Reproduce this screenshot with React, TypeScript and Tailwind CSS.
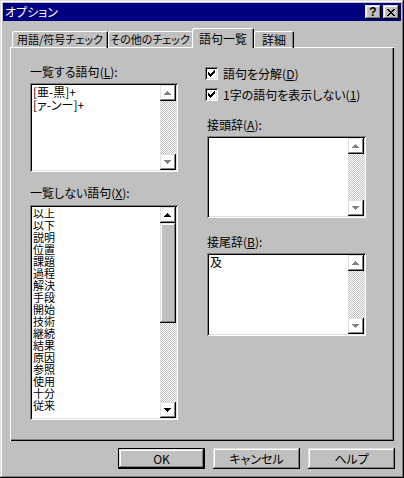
import React from "react";

const font = "font-['Noto_Sans_CJK_JP',sans-serif] [font-feature-settings:'palt']";
const raised =
	"shadow-[inset_-1px_-1px_#000,inset_1px_1px_#dfdfdf,inset_-2px_-2px_#808080,inset_2px_2px_#fff]";
const sunken =
	"shadow-[inset_1px_1px_#808080,inset_-1px_-1px_#fff,inset_2px_2px_#000,inset_-2px_-2px_#dfdfdf]";
const dither =
	"bg-[conic-gradient(#c0c0c0_25%,#fff_0_50%,#c0c0c0_0_75%,#fff_0)] bg-[length:2px_2px]";

const UP = "M3 0h1v1h1v1h1v1h1v1H0V3h1V2h1V1h1z";
const DOWN = "M0 0h7v1H6v1H5v1H4v1H3V3H2V2H1V1H0z";

function Arrow({ dir, disabled }: { dir: "up" | "down"; disabled?: boolean }) {
	const d = dir === "up" ? UP : DOWN;
	return (
		<svg width="8" height="5" viewBox="0 0 8 5" shapeRendering="crispEdges">
			{disabled && <path d={d} fill="#fff" transform="translate(1,1)" />}
			<path d={d} fill={disabled ? "#808080" : "#000"} />
		</svg>
	);
}

function ScrollBtn({ dir, disabled }: { dir: "up" | "down"; disabled?: boolean }) {
	return (
		<div className={`flex h-[16px] w-[16px] shrink-0 items-center justify-center ${raised}`}>
			<Arrow dir={dir} disabled={disabled} />
		</div>
	);
}

function ListBox({
	items,
	height,
	lineClass,
	thumb,
}: {
	items: string[];
	height: string;
	lineClass: string;
	thumb?: boolean;
}) {
	return (
		<div className={`flex bg-white p-[2px] ${height} ${sunken}`}>
			<div className="flex-1 overflow-hidden pl-[1px] text-black">
				{items.map((t) => (
					<div key={t} className={`whitespace-nowrap ${lineClass}`}>
						{t}
					</div>
				))}
			</div>
			<div className="flex w-[16px] flex-col">
				<ScrollBtn dir="up" disabled={!thumb} />
				{thumb && <div className={`h-[100px] w-[16px] shrink-0 bg-[#c0c0c0] ${raised}`} />}
				<div className={`flex-1 ${dither}`} />
				<ScrollBtn dir="down" disabled={!thumb} />
			</div>
		</div>
	);
}

function Label({ text, acc, className = "" }: { text: string; acc: string; className?: string }) {
	return (
		<div className={`h-[14px] text-[12px] leading-[14px] text-black ${className}`}>
			{text}(<span className="underline">{acc}</span>):
		</div>
	);
}

function Check({ text, acc, className = "" }: { text: string; acc: string; className?: string }) {
	return (
		<div className={`flex h-[13px] items-center gap-[5px] ${className}`}>
			<div className={`flex h-[13px] w-[13px] items-center justify-center bg-white ${sunken}`}>
				<svg width="7" height="7" viewBox="0 0 7 7" shapeRendering="crispEdges">
					<path d="M6 0h1v3H6v1H5v1H4v1H3v1H2V6H1V5H0V2h1v1h1v1h1V3h1V2h1V1h1z" fill="#000" />
				</svg>
			</div>
			<div className="whitespace-nowrap text-[12px] leading-[14px] text-black">
				{text}(<span className="underline">{acc}</span>)
			</div>
		</div>
	);
}

function Button({ label, isDefault }: { label: string; isDefault?: boolean }) {
	return (
		<div className={`h-[21px] w-[87px] ${isDefault ? "border border-black" : ""}`}>
			<div
				className={`flex h-full w-full items-center justify-center text-[12px] text-black ${raised}`}
			>
				{label}
			</div>
		</div>
	);
}

const excluded = [
	"以上",
	"以下",
	"説明",
	"位置",
	"課題",
	"過程",
	"解決",
	"手段",
	"開始",
	"技術",
	"継続",
	"結果",
	"原因",
	"参照",
	"使用",
	"十分",
	"従来",
];

export default function App() {
	return (
		<div
			className={`flex h-[478px] w-[404px] flex-col bg-[#c0c0c0] p-[3px] ${font} shadow-[inset_-1px_-1px_#000,inset_1px_1px_#dfdfdf,inset_-2px_-2px_#808080,inset_2px_2px_#fff]`}
		>
			{/* TITLE BAR */}
			<div className="flex h-[18px] items-center bg-[#000080] pl-[2px] pr-[2px]">
				<div className="flex-1 text-[12px] leading-[18px] text-white">オプション</div>
				<div
					className={`flex h-[14px] w-[16px] items-center justify-center bg-[#c0c0c0] font-['Liberation_Sans',sans-serif] text-[12px] font-bold leading-none text-black ${raised}`}
				>
					?
				</div>
				<div
					className={`ml-[2px] flex h-[14px] w-[16px] items-center justify-center bg-[#c0c0c0] ${raised}`}
				>
					<svg width="8" height="7" viewBox="0 0 8 7" shapeRendering="crispEdges">
						<path
							d="M0 0h2v1h1v1h2V1h1V0h2v1H7v1H6v1H5v1h1v1h1v1h1v1H6V6H5V5H3v1H2v1H0V6h1V5h1V4h1V3H2V2H1V1H0z"
							fill="#000"
						/>
					</svg>
				</div>
			</div>

			{/* TABS */}
			<div className="px-[7px] pt-[7px]">
				<div className="flex h-[20px] items-end pl-[2px]">
					<div className="flex h-[17px] w-[96px] items-center justify-center whitespace-nowrap rounded-t-[2px] text-[11px] text-black shadow-[inset_1px_1px_#fff,inset_-1px_0_#000,inset_-2px_0_#808080]">
						用語/符号チェック
					</div>
					<div className="flex h-[17px] w-[84px] items-center justify-center whitespace-nowrap rounded-t-[2px] text-[11px] text-black shadow-[inset_1px_1px_#fff]">
						その他のチェック
					</div>
					<div className="relative z-10 flex h-[20px] w-[62px] items-start justify-center whitespace-nowrap rounded-t-[2px] bg-[#c0c0c0] pt-[2px] text-[12px] text-black shadow-[inset_1px_1px_#fff,inset_-1px_0_#000,inset_-2px_0_#808080]">
						語句一覧
					</div>
					<div className="flex h-[17px] w-[40px] items-center justify-center whitespace-nowrap rounded-t-[2px] text-[12px] text-black shadow-[inset_1px_1px_#fff,inset_-1px_0_#000,inset_-2px_0_#808080]">
						詳細
					</div>
				</div>

				{/* PANEL */}
				<div className="-mt-px flex h-[394px] pl-[20px] shadow-[inset_1px_1px_#fff,inset_-1px_-1px_#000,inset_-2px_-2px_#808080]">
					{/* LEFT COLUMN */}
					<div className="w-[148px] pt-[18px]">
						<Label text="一覧する語句" acc="L" />
						<div className="mt-[4px]">
							<ListBox
								items={["[亜-黒]+", "[ァ-ンー]+"]}
								height="h-[89px]"
								lineClass="h-[13px] text-[12px] leading-[13px]"
							/>
						</div>
						<Label text="一覧しない語句" acc="X" className="mt-[14px]" />
						<div className="mt-[5px]">
							<ListBox
								items={excluded}
								height="h-[215px]"
								lineClass="h-[12px] text-[11px] leading-[12px]"
								thumb
							/>
						</div>
					</div>

					{/* RIGHT COLUMN */}
					<div className="ml-[27px] w-[161px] pt-[20px]">
						<Check text="語句を分解" acc="D" />
						<Check text="1字の語句を表示しない" acc="1" className="mt-[8px]" />
						<Label text="接頭辞" acc="A" className="ml-[2px] mt-[17px]" />
						<div className="ml-[2px] mt-[4px]">
							<ListBox items={[]} height="h-[82px]" lineClass="h-[13px] text-[12px] leading-[13px]" />
						</div>
						<Label text="接尾辞" acc="B" className="ml-[2px] mt-[17px]" />
						<div className="ml-[2px] mt-[4px]">
							<ListBox items={["及"]} height="h-[83px]" lineClass="h-[14px] text-[12px] leading-[14px]" />
						</div>
					</div>
				</div>
			</div>

			{/* BUTTONS */}
			<div className="mt-[7px] flex justify-end gap-[8px] pr-[6px]">
				<Button label="OK" isDefault />
				<Button label="キャンセル" />
				<Button label="ヘルプ" />
			</div>
		</div>
	);
}
